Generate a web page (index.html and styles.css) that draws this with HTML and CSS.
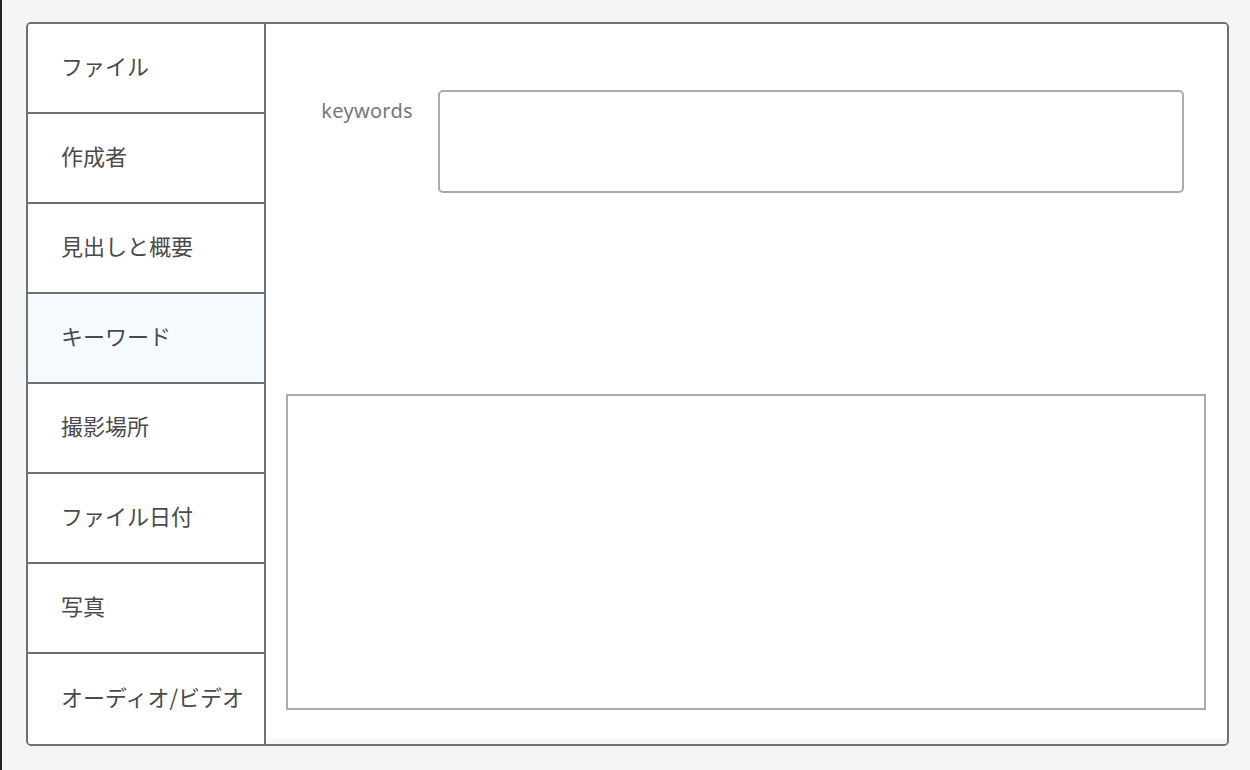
FILE: index.html
```html
<!DOCTYPE html>
<html lang="ja">
<head>
<meta charset="utf-8">
<link rel="stylesheet" href="styles.css">
</head>
<body>
<div class="page">
  <div class="frame">
    <nav class="tabs">
      <div class="tab">ファイル</div>
      <div class="tab">作成者</div>
      <div class="tab">見出しと概要</div>
      <div class="tab active">キーワード</div>
      <div class="tab">撮影場所</div>
      <div class="tab">ファイル日付</div>
      <div class="tab">写真</div>
      <div class="tab last">オーディオ/ビデオ</div>
    </nav>
    <main class="panel">
      <div class="content">
        <div class="field">
          <label class="label">keywords</label>
          <div class="input"></div>
        </div>
        <div class="box"></div>
      </div>
      <div class="strip"></div>
    </main>
  </div>
</div>
</body>
</html>
```
FILE: styles.css
```css
html, body {
  margin: 0;
  padding: 0;
  height: 100%;
}
body {
  background: #f4f5f7;
  font-family: "Noto Sans CJK JP", "Noto Sans", sans-serif;
}
.page {
  box-sizing: border-box;
  height: 770px;
  border-left: 2px solid #222;
  padding: 22px 21px 0 24px;
}
.frame {
  box-sizing: border-box;
  width: 1203px;
  height: 724px;
  border: 2px solid #707070;
  border-radius: 5px;
  background: #fff;
  display: flex;
  overflow: hidden;
}
.tabs {
  width: 236px;
  border-right: 2px solid #707070;
  display: flex;
  flex-direction: column;
  flex-shrink: 0;
}
.tab {
  box-sizing: content-box;
  height: 81px;
  padding-left: 33px;
  padding-bottom: 7px;
  border-bottom: 2px solid #707070;
  display: flex;
  align-items: center;
  font-size: 22px;
  color: #4a4a4a;
  background: #fff;
}
.tab.active {
  background: #f5faff;
}
.tab.last {
  border-bottom: none;
  flex: 1;
}
.panel {
  flex: 1;
  display: flex;
  flex-direction: column;
}
.content {
  flex: 1;
  padding: 66px 21px 0 20px;
  background: #fff;
}
.field {
  display: flex;
  align-items: flex-start;
}
.label {
  width: 127px;
  text-align: right;
  font-family: "Noto Sans", sans-serif;
  font-size: 20px;
  letter-spacing: 0.3px;
  color: #777;
  padding-top: 8px;
  margin-right: 25px;
  line-height: 26px;
}
.input {
  box-sizing: border-box;
  width: 746px;
  height: 103px;
  border: 2px solid #aaa;
  border-radius: 5px;
}
.box {
  box-sizing: border-box;
  margin-top: 201px;
  width: 920px;
  height: 316px;
  border: 2px solid #aaa;
}
.strip {
  height: 6px;
  background: #f7f7f8;
}
```
